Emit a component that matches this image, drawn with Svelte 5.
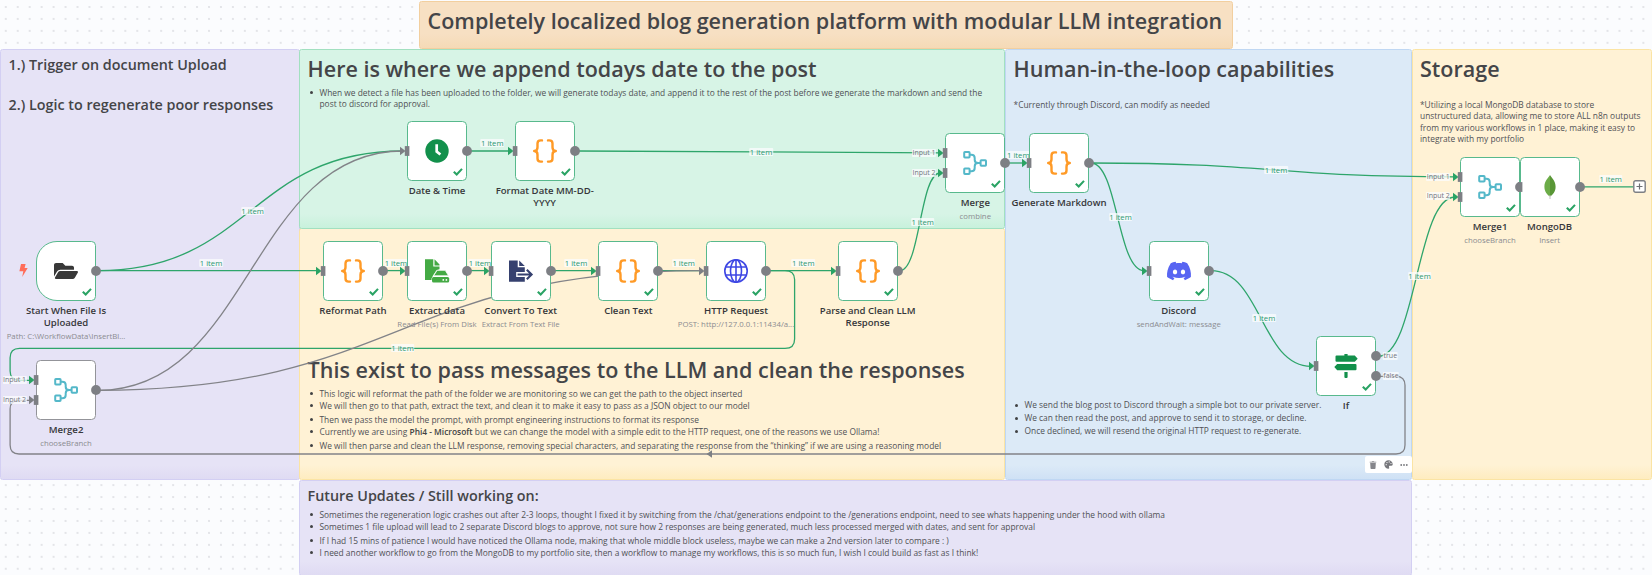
<script>
  const check = 'M46.800 50.700l2.900 2.800 5.300-5.600';

  const nodes = [
    { x: 36, y: 240.600, icon: 'folder', name: ['Start When File Is', 'Uploaded'], sub: 'Path: C:\\WorkflowData\\InsertBl...', trigger: true, ins: [], outs: [30] },
    { x: 36, y: 360.300, icon: 'merge', name: ['Merge2'], sub: 'chooseBranch', idle: true, ins: [20, 40], outs: [30], greyIns: [1] },
    { x: 323, y: 240.600, icon: 'code', name: ['Reformat Path'], ins: [30], outs: [30] },
    { x: 407, y: 240.600, icon: 'read', name: ['Extract data'], sub: 'Read File(s) From Disk', ins: [30], outs: [30] },
    { x: 490.700, y: 240.600, icon: 'export', name: ['Convert To Text'], sub: 'Extract From Text File', ins: [30], outs: [30] },
    { x: 598.300, y: 240.600, icon: 'code', name: ['Clean Text'], ins: [30], outs: [30] },
    { x: 706, y: 240.600, icon: 'globe', name: ['HTTP Request'], sub: 'POST: http://127.0.0.1:11434/a...', ins: [30], outs: [30], greyIns: [0] },
    { x: 837.700, y: 240.600, icon: 'code', name: ['Parse and Clean LLM', 'Response'], ins: [30], outs: [30] },
    { x: 407, y: 121, icon: 'clock', name: ['Date & Time'], ins: [30], outs: [30], greyIns: [0] },
    { x: 514.700, y: 121, icon: 'code', name: ['Format Date MM-DD-', 'YYYY'], ins: [30], outs: [30] },
    { x: 945.300, y: 133, icon: 'merge', name: ['Merge'], sub: 'combine', ins: [20, 40], outs: [30] },
    { x: 1029, y: 133, icon: 'code', name: ['Generate Markdown'], ins: [30], outs: [30] },
    { x: 1148.700, y: 240.600, icon: 'discord', name: ['Discord'], sub: 'sendAndWait: message', ins: [30], outs: [30] },
    { x: 1316, y: 336.300, icon: 'signs', name: ['If'], ins: [30], outs: [20, 40] },
    { x: 1460, y: 157, icon: 'merge', name: ['Merge1'], sub: 'chooseBranch', ins: [20, 40], outs: [30] },
    { x: 1519.600, y: 157, icon: 'leaf', name: ['MongoDB'], sub: 'Insert', ins: [30], outs: [30], noArrow: true }
  ];

  function curve(x1, y1, x2, y2) {
    const h = Math.abs(x2 - x1) / 2;
    return `M${x1} ${y1}C${x1 + h} ${y1} ${x2 - h} ${y2} ${x2} ${y2}`;
  }

  const green = [
    curve(98, 270.6, 403, 151),
    curve(98, 270.6, 318, 270.6),
    curve(385, 270.6, 402, 270.6),
    curve(469, 270.6, 486, 270.6),
    curve(553, 270.6, 593, 270.6),
    curve(660, 270.6, 701, 270.6),
    curve(768, 270.6, 832, 270.6),
    curve(900, 270.6, 940, 173),
    curve(469, 151, 510, 151),
    curve(577, 151, 940, 152.8),
    curve(1007, 163, 1024, 163),
    curve(1091, 163, 1455, 176.8),
    curve(1091, 163, 1144, 270.6),
    curve(1211, 270.6, 1311, 366.3),
    curve(1378, 356.3, 1455, 197),
    'M1582 186.8H1633',
    'M768 270.6H785q9.6 0 9.6 9V339q0 9.4-9.6 9.4H19.5q-9.4 0-9.4 9.4V371q0 9.3 9.4 9.3H31'
  ];
  const grey = [
    curve(98, 390.3, 403, 151),
    curve(98, 390.3, 701, 270.6),
    'M1378 376.3H1396q9 0 9 9V445q0 9-9 9H19q-8.9 0-8.9-9V409q0-8.7 8.9-8.7H31'
  ];

  const counts = [
    [252.600, 211], [211, 262.700], [395.900, 262.700], [479.900, 262.700], [576, 262.700],
    [683.700, 262.700], [803.300, 262.700], [922.700, 222], [492.300, 143.300], [761, 152],
    [1018.300, 155], [1276, 170], [1120.500, 217], [1264, 318], [1419.500, 276], [1610.700, 179], [402.500, 348]
  ];
  const ports = [
    [14.500, 380.300, 'Input 1'], [14.500, 399.600, 'Input 2'],
    [924, 152.500, 'Input 1'], [924, 172.500, 'Input 2'],
    [1438.300, 176.500, 'Input 1'], [1438.300, 196.400, 'Input 2'],
    [1390.300, 356.400, 'true'], [1391, 376.400, 'false']
  ];
</script>

<main class="canvas">
  <section class="note orange title"><h1>Completely localized blog generation platform with modular LLM integration</h1></section>

  <section class="note purple upload">
    <h2>1.) Trigger on document Upload</h2>
    <h2 class="second">2.) Logic to regenerate poor responses</h2>
  </section>

  <section class="note yellow llm">
    <h1>This exist to pass messages to the LLM and clean the responses</h1>
    <ul class="uneven">
      <li>This logic will reformat the path of the folder we are monitoring so we can get the path to the object inserted</li>
      <li>We will then go to that path, extract the text, and clean it to make it easy to pass as a JSON object to our model</li>
      <li>Then we pass the model the prompt, with prompt engineering instructions to format its response</li>
      <li>Currently we are using <b>Phi4 - Microsoft</b> but we can change the model with a simple edit to the HTTP request, one of the reasons we use Ollama!</li>
      <li>We will then parse and clean the LLM response, removing special characters, and separating the response from the “thinking” if we are using a reasoning model</li>
    </ul>
  </section>

  <section class="note mint date">
    <h1>Here is where we append todays date to the post</h1>
    <ul>
      <li>When we detect a file has been uploaded to the folder, we will generate todays date, and append it to the rest of the post before we generate the markdown and send the<br />post to discord for approval.</li>
    </ul>
  </section>

  <section class="note blue human">
    <h1>Human-in-the-loop capabilities</h1>
    <p>*Currently through Discord, can modify as needed</p>
    <ul>
      <li>We send the blog post to Discord through a simple bot to our private server.</li>
      <li>We can then read the post, and approve to send it to storage, or decline.</li>
      <li>Once declined, we will resend the original HTTP request to re-generate.</li>
    </ul>
  </section>

  <section class="note yellow storage">
    <h1>Storage</h1>
    <p>*Utilizing a local MongoDB database to store<br />unstructured data, allowing me to store ALL n8n outputs<br />from my various workflows in 1 place, making it easy to<br />integrate with my portfolio</p>
  </section>

  <section class="note purple future">
    <h2>Future Updates / Still working on:</h2>
    <ul class="uneven">
      <li>Sometimes the regeneration logic crashes out after 2-3 loops, thought I fixed it by switching from the /chat/generations endpoint to the /generations endpoint, need to see whats happening under the hood with ollama</li>
      <li>Sometimes 1 file upload will lead to 2 separate Discord blogs to approve, not sure how 2 responses are being generated, much less processed merged with dates, and sent for approval</li>
      <li>If I had 15 mins of patience I would have noticed the Ollama node, making that whole middle block useless, maybe we can make a 2nd version later to compare : )</li>
      <li>I need another workflow to go from the MongoDB to my portfolio site, then a workflow to manage my workflows, this is so much fun, I wish I could build as fast as I think!</li>
    </ul>
  </section>

  <svg class="edges" width="1652" height="575" viewBox="0 0 1652 575">
    {#each green as d}<path {d} stroke="#2ea56b" />{/each}
    {#each grey as d}<path {d} stroke="#828388" />{/each}
    <path d="M706.500 454l5.500-3.700v7.400z" fill="#7d7f84" stroke="none" />
  </svg>

  {#each counts as [x, y]}
    <span class="tag" style="left:{x}px;top:{y}px">1 item</span>
  {/each}

  {#each nodes as n}
    <article class="node" style="left:{n.x}px;top:{n.y}px">
      <div class="box" class:trigger={n.trigger} class:idle={n.idle}></div>
      <svg class="face" width="80" height="60" viewBox="-10 0 80 60">
        <g transform="translate(18 18)">
          {#if n.icon === 'code'}
            <path d="M9 1.400H7.700Q4.500 1.400 4.500 4.600V8.200Q4.500 12 1.200 12Q4.500 12 4.500 15.800V19.400Q4.500 22.600 7.700 22.600H9M15 1.400h1.300q3.200 0 3.200 3.200V8.200Q19.500 12 22.800 12Q19.500 12 19.500 15.800V19.400q0 3.200-3.200 3.200H15" fill="none" stroke="#ff9a26" stroke-width="2.400" stroke-linecap="round" stroke-linejoin="round" />
          {:else if n.icon === 'merge'}
            <g fill="none" stroke="#54b8c9" stroke-width="2">
              <rect x="1.200" y="1.100" width="5.400" height="5.400" rx=".7" />
              <rect x="1.200" y="17.500" width="5.400" height="5.400" rx=".7" />
              <rect x="17.600" y="9.300" width="5.400" height="5.400" rx=".7" />
              <path d="M6.600 3.800H8.300q3.400 0 3.400 3.300v1.600q0 3.300 3.400 3.300H17.600M6.600 20.200H8.300q3.400 0 3.400-3.300v-1.600q0-3.300 3.400-3.300" />
            </g>
          {:else if n.icon === 'folder'}
            <path transform="scale(.0417) translate(0 32)" fill="#383838" d="M572.694 292.093L500.27 416.248A63.997 63.997 0 0 1 444.989 448H45.025c-18.523 0-30.064-20.093-20.731-36.093l72.424-124.155A64 64 0 0 1 152 256h399.964c18.523 0 30.064 20.093 20.730 36.093zM152 224h328v-48c0-26.510-21.490-48-48-48H272l-64-64H48C21.490 64 0 85.490 0 112v278.046l69.077-118.418C86.214 242.250 117.989 224 152 224z" />
          {:else if n.icon === 'clock'}
            <circle cx="12" cy="12" r="11.700" fill="#12904b" />
            <path d="M11.700 5.200v7.300l3.700 3" fill="none" stroke="#fff" stroke-width="2.700" />
          {:else if n.icon === 'read'}
            <path d="M0 .3H8.300V7.600H14.500V10.300L11.500 11.300 8 16.500 6.500 19.500V21H0zM9.500 .3L14.500 5.600V6.400H9.500z" fill="#44aa44" />
            <path d="M12.100 11.300h8.100l3.400 5.500H8.600z" fill="#44aa44" stroke="#fff" stroke-width=".8" />
            <path d="M8.600 18H22.600q1.600 0 1.600 1.600v2.400q0 1.600-1.600 1.600H8.600q-1.600 0-1.600-1.600v-2.400q0-1.600 1.600-1.600z" fill="#44aa44" />
            <circle cx="18.300" cy="20.900" r=".9" fill="#fff" /><circle cx="21.400" cy="20.900" r=".9" fill="#fff" />
          {:else if n.icon === 'export'}
            <path d="M0 1.500H8.700V8.200H15.800V12.900H7.200V18.100H15.800V22.700H0zM10.200 1.500L15.800 6.900H10.200z" fill="#36416f" />
            <path d="M8.500 15.500H22M17.800 10.800L22.600 15.500 17.800 20.200" fill="none" stroke="#36416f" stroke-width="2.100" />
          {:else if n.icon === 'globe'}
            <g fill="none" stroke="#3e47e4" stroke-width="1.600">
              <circle cx="12" cy="12" r="11.200" />
              <ellipse cx="12" cy="12" rx="5.500" ry="11.200" />
              <path d="M12 .8V23.200M1.800 8H22.200M1.800 16H22.200" />
            </g>
          {:else if n.icon === 'discord'}
            <path fill="#5865f2" d="M20.317 4.370a19.791 19.791 0 00-4.885-1.515.074.074 0 00-.079.037c-.211.375-.445.865-.608 1.250-1.845-.276-3.680-.276-5.487 0-.164-.393-.406-.874-.618-1.250a.077.077 0 00-.079-.037 19.736 19.736 0 00-4.885 1.515.070.070 0 00-.032.028C.533 9.046-.319 13.580.099 18.058a.082.082 0 00.031.056c2.053 1.508 4.041 2.423 5.993 3.029a.078.078 0 00.084-.028c.462-.630.873-1.295 1.226-1.994a.076.076 0 00-.042-.106c-.653-.248-1.274-.550-1.872-.892a.077.077 0 01-.008-.128c.126-.094.252-.192.372-.291a.074.074 0 01.078-.010c3.928 1.793 8.180 1.793 12.061 0a.074.074 0 01.079.009c.120.099.246.198.373.292a.077.077 0 01-.007.128 12.299 12.299 0 01-1.873.891.077.077 0 00-.041.107c.360.698.772 1.363 1.225 1.993a.076.076 0 00.084.029c1.961-.607 3.950-1.522 6.002-3.029a.077.077 0 00.031-.055c.500-5.177-.838-9.674-3.549-13.660a.061.061 0 00-.031-.029zM8.020 15.331c-1.183 0-2.157-1.086-2.157-2.419 0-1.333.956-2.419 2.157-2.419 1.211 0 2.176 1.095 2.157 2.419 0 1.333-.956 2.419-2.157 2.419zm7.975 0c-1.183 0-2.157-1.086-2.157-2.419 0-1.333.955-2.419 2.157-2.419 1.211 0 2.176 1.095 2.157 2.419 0 1.333-.946 2.419-2.157 2.419z" />
          {:else if n.icon === 'signs'}
            <path fill="#12904b" d="M10.400 0h3.200v1.600H20.800L23.700 4.700 20.800 7.800H2.500Q1.500 7.800 1.500 6.800V2.600Q1.500 1.600 2.500 1.600h7.900zM3.200 10H21.500q1 0 1 1v4.200q0 1-1 1H3.200L.3 13.100zM10.400 18h3.200v5q0 1-1 1h-1.200q-1 0-1-1z" />
          {:else if n.icon === 'leaf'}
            <path d="M12 0C11.200 2 6.400 5.500 6.400 11.700C6.400 17 9.600 19.900 11.600 21.300L12 21.500z" fill="#6cac48" />
            <path d="M12 0C12.800 2 17.600 5.500 17.600 11.700C17.600 17 14.400 19.900 12.400 21.300L12 21.500z" fill="#599636" />
            <path d="M12 20V24" stroke="#c2bfbf" stroke-width="1" />
          {/if}
        </g>
        {#if !n.idle}<path d={check} fill="none" stroke="#2aa364" stroke-width="2.100" />{/if}
        {#each n.ins as y, i}
          {#if !n.noArrow}
            <path d="M-7 {y - 4.200}L-1.500 {y}L-7 {y + 4.200}z" fill={n.greyIns?.includes(i) ? '#7d7f84' : '#2aa364'} />
          {/if}
          <rect x="-2.200" y={y - 4.900} width="4.600" height="9.800" fill="#7d7f84" />
        {/each}
        {#each n.outs as y}<circle cx="60" cy={y} r="4.900" fill="#7d7f84" />{/each}
      </svg>
      {#if n.trigger}
        <svg class="bolt" width="9" height="13" viewBox="0 0 9 13"><path d="M2 0H6.600L5.600 4H8.700L3.200 13L4.300 7.200H.4z" fill="#ff6d5a" /></svg>
      {/if}
      <div class="caption">
        {#each n.name as line}<span class="name">{line}</span>{/each}
        {#if n.sub}<span class="sub">{n.sub}</span>{/if}
      </div>
    </article>
  {/each}

  {#each ports as [x, y, text]}
    <span class="tag port" style="left:{x}px;top:{y}px">{text}</span>
  {/each}

  <svg class="plus" width="13" height="13" viewBox="0 0 13 13"><rect x=".8" y=".8" width="11.400" height="11.400" rx="1.800" fill="#fff" stroke="#7d7f84" stroke-width="1.400" /><path d="M6.500 3.500v6M3.500 6.500h6" stroke="#6d6f74" stroke-width="1.200" /></svg>

  <div class="toolbar">
    <svg width="8" height="8" viewBox="0 0 8 8"><path d="M.7 .7H2.700L3 .2H5L5.300 .7H7.300V1.600H.7zM1.200 2.100H6.800L6.500 7.200Q6.400 7.900 5.800 7.900H2.200Q1.600 7.900 1.500 7.200z" fill="#85868b" /></svg>
    <svg width="9" height="9" viewBox="0 0 9 9"><path d="M4.500 .3A4.200 4.200 0 1 0 4.500 8.700C5.600 8.700 5.200 7.600 5 6.900C4.800 6.200 5.300 5.700 6 5.700H7.500C8.300 5.700 8.700 5.200 8.700 4.500A4.200 4.200 0 0 0 4.500 .3z" fill="#77787d" /><g fill="#fff"><circle cx="2.200" cy="4.700" r=".6" /><circle cx="3" cy="2.600" r=".6" /><circle cx="5.200" cy="1.900" r=".6" /><circle cx="7" cy="3.500" r=".6" /></g></svg>
    <svg width="8" height="8" viewBox="0 0 8 8"><g fill="#77787d"><circle cx="1.200" cy="4" r=".9" /><circle cx="4" cy="4" r=".9" /><circle cx="6.800" cy="4" r=".9" /></g></svg>
  </div>
</main>

<style>
  :global(body) { margin: 0; }
  .canvas {
    position: relative;
    width: 1652px;
    height: 575px;
    overflow: hidden;
    font-family: "Open Sans", sans-serif;
    color: #444548;
    background-color: #fbfcfe;
    background-image: radial-gradient(circle, #e3e4e8 0.7px, transparent 1px);
    background-size: 11.96px 11.96px;
    background-position: -0.2px 1px;
  }
  .note {
    position: absolute;
    box-sizing: border-box;
    padding: 5px 7.600px 0;
    border: 1px solid;
    border-radius: 2.500px;
    white-space: nowrap;
  }
  .purple { background: linear-gradient(0deg, #dfdbf3, #e6e3f6 14px); border-color: #d3cff3; }
  .yellow { background: linear-gradient(0deg, #feecc0, #fff2d5 14px); border-color: #fbe4a4; }
  .mint { background: linear-gradient(0deg, #c8f1dc, #d7f4e6 14px); border-color: #a2e0c0; }
  .blue { background: linear-gradient(0deg, #cfe1f5, #dceaf7 14px); border-color: #bfd7f3; }
  .orange { background: linear-gradient(0deg, #f5dab6, #f7e0c3 14px); border-color: #f2cf9f; }
  .title { left: 419px; top: 1px; width: 814px; height: 48px; }
  .upload { left: 0; top: 49px; width: 299.500px; height: 431px; }
  .date { left: 299px; top: 49px; width: 706px; height: 180px; }
  .llm { left: 299px; top: 228px; width: 706px; height: 252px; padding-top: 127px; }
  .human { left: 1005px; top: 49px; width: 407px; height: 431px; }
  .storage { left: 1412px; top: 49px; width: 240px; height: 431px; padding-left: 7px; }
  .future { left: 299px; top: 480px; width: 1113px; height: 96px; }
  h1, h2, p, ul { margin: 0; }
  h1 { font-size: 21.520px; line-height: 27px; font-weight: 600; }
  h2 { font-size: 14.340px; line-height: 19px; font-weight: 600; }
  .second { margin-top: 21px; }
  ul {
    display: flex;
    flex-direction: column;
    gap: 2px;
    padding: 0 0 0 11.900px;
    margin-top: 5px;
    list-style: none;
  }
  .future ul { margin-top: 4px; }
  .human ul { margin-top: 289px; padding-left: 10.900px; }
  li, p { font-size: 8.380px; line-height: 11px; color: #505155; }
  li { position: relative; }
  li::before {
    content: "";
    position: absolute;
    left: -9.200px;
    top: 4.300px;
    width: 3px;
    height: 3px;
    border-radius: 50%;
    background: #414244;
  }
  .uneven { gap: 0; }
  .uneven li { margin-bottom: 1px; }
  .uneven li:nth-child(even) { margin-bottom: 3px; }
  b { font-weight: 600; color: #414244; }
  p { margin-top: 17px; line-height: 11.300px; }
  .edges { position: absolute; inset: 0; fill: none; stroke-width: 1.300; }
  .tag {
    position: absolute;
    transform: translate(-50%, -50%);
    padding: 0 0.500px;
    font-size: 7.700px;
    line-height: 8px;
    white-space: nowrap;
    color: #2b9871;
    background: rgba(251, 252, 254, 0.75);
    border-radius: 1px;
  }
  .port { font-size: 7px; color: #73757e; }
  .node { position: absolute; width: 60px; height: 60px; }
  .box {
    box-sizing: border-box;
    height: 60px;
    border: 1.200px solid #58b98d;
    border-radius: 4.500px;
    background: #fff;
  }
  .trigger { border-radius: 21px 4.500px 4.500px 21px; }
  .idle { border-color: #939499; }
  .face { position: absolute; left: -10px; top: 0; }
  .bolt { position: absolute; left: -17.500px; top: 23.500px; }
  .caption {
    display: flex;
    flex-direction: column;
    align-items: center;
    width: 140px;
    margin: 4px 0 0 -40px;
    white-space: nowrap;
  }
  .name { font-size: 9.570px; line-height: 12px; font-weight: 600; color: #36373a; }
  .sub { margin-top: 2px; font-size: 7.770px; line-height: 11px; color: #8b8c91; }
  .plus { position: absolute; left: 1632.800px; top: 180.300px; }
  .toolbar {
    position: absolute;
    left: 1365px;
    top: 456px;
    width: 47px;
    height: 17px;
    display: flex;
    align-items: center;
    justify-content: space-around;
    background: #fff;
    border-radius: 2px;
  }
</style>
